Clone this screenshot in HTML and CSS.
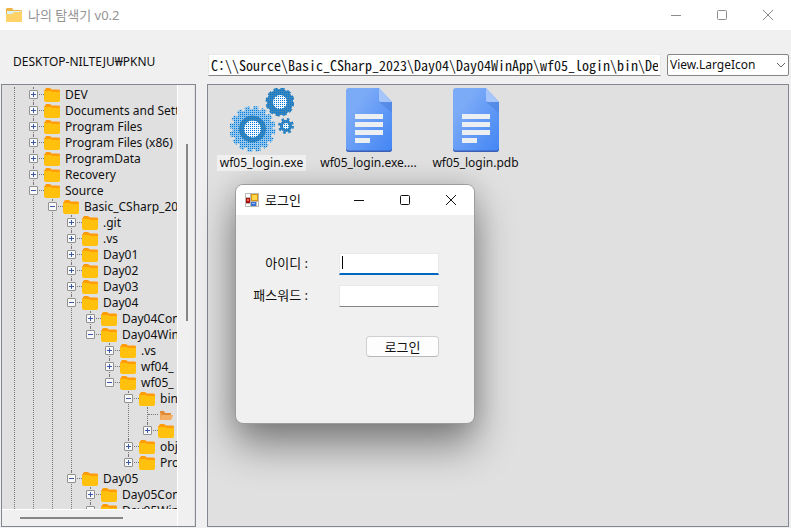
FILE: index.html
```
<!DOCTYPE html>
<html lang="ko">
<head>
<meta charset="utf-8">
<title>나의 탐색기 v0.2</title>
<link rel="stylesheet" href="styles.css">
</head>
<body>
<svg class="defs" aria-hidden="true">
  <defs>
    <linearGradient id="docFill" x1="0" y1="0" x2="1" y2="1">
      <stop offset="0.25" stop-color="#7baaf7"/><stop offset="1" stop-color="#4285f4"/>
    </linearGradient>
    <pattern id="mesh" width="2" height="2" patternUnits="userSpaceOnUse">
      <rect width="2" height="2" fill="#93c6ea"/><rect width="1" height="1" fill="#0078d7"/>
    </pattern>
    <pattern id="meshDark" width="2" height="2" patternUnits="userSpaceOnUse">
      <rect width="2" height="2" fill="#3a86b8"/><rect width="1" height="1" fill="#0078d7"/>
    </pattern>
    <pattern id="meshWhite" width="2" height="2" patternUnits="userSpaceOnUse">
      <rect width="2" height="2" fill="#f4faff"/><rect width="1" height="1" fill="#0078d7"/>
    </pattern>
    <symbol id="folder" viewBox="0 0 16 14">
      <path d="M1 1.5 2 0h4l2 1.5h7l1 1V7H0V3z" fill="#ff9c07"/>
      <path d="M0 3.5 1 3h6l1.5 1H16v8.5L15 14H1.5L0 12.5z" fill="#ffc10d"/>
    </symbol>
    <symbol id="open" viewBox="0 0 16 14">
      <path d="M2 3h4l1 2h6v3H2z" fill="#e08a35"/>
      <path d="M2 12V4l2 3h11l-2 5z" fill="#f0a552"/><path d="M2 12 4 7h11l-2 5z" fill="#f3b067"/>
    </symbol>
    <symbol id="doc" viewBox="0 0 46 64">
      <path d="M3 0h30l13 14v47a3 3 0 0 1-3 3H3a3 3 0 0 1-3-3V3a3 3 0 0 1 3-3z" fill="url(#docFill)"/>
      <path d="M33 14h13v11z" fill="#3f73cf" opacity=".35"/>
      <path d="M33 0l13 14H35a2 2 0 0 1-2-2z" fill="#a6c5fa"/>
      <path d="M0 60.500a3 3 0 0 0 3 2h40a3 3 0 0 0 3-2v.5a3 3 0 0 1-3 3H3a3 3 0 0 1-3-3z" fill="#3a5fb5"/>
      <path d="M9 26h28v5H9zM9 34h28v5H9zM9 42h28v5H9zM9 50h15v5H9z" fill="#eceff1"/>
    </symbol>
  </defs>
</svg>
<main class="window">
  <header class="titlebar">
    <svg class="app-icon" viewBox="0 0 16 14"><path d="M0 1 1 0h5l1.500 2H15l1 1v10l-1 1H1l-1-1z" fill="#eeb342"/><path d="M1 3h14v4H1z" fill="#d9f0f4"/><path d="M0 6h6l2-2h8v9l-1 1H1l-1-1z" fill="#ffd368"/></svg>
    <h1>나의 탐색기 v0.2</h1>
    <div class="caption muted">
      <button type="button" aria-label="최소화"><svg viewBox="0 0 12 12"><path d="M1 6.500h10"/></svg></button>
      <button type="button" aria-label="최대화"><svg viewBox="0 0 12 12"><rect x="1.500" y="1.500" width="9" height="9" rx="1"/></svg></button>
      <button type="button" aria-label="닫기"><svg viewBox="0 0 12 12"><path d="m1 1 10 10M11 1 1 11"/></svg></button>
    </div>
  </header>
  <section class="tools">
    <span class="account">DESKTOP-NILTEJU₩PKNU</span>
    <input class="path" type="text" aria-label="경로" value="C:\\Source\Basic_CSharp_2023\Day04\Day04WinApp\wf05_login\bin\De">
    <div class="view">
      <select aria-label="보기"><option>View.LargeIcon</option></select>
      <svg viewBox="0 0 10 6"><path d="m1 1 4 4 4-4"/></svg>
    </div>
  </section>
  <section class="panes">
    <nav class="tree" aria-label="폴더">
      <div class="tree-view">
        <ul class="root"><li class="stem"><ul>
          <li><div class="node"><button class="box plus" aria-label="펼치기"></button><svg><use href="#folder"/></svg>DEV</div></li>
          <li><div class="node"><button class="box plus" aria-label="펼치기"></button><svg><use href="#folder"/></svg>Documents and Sett</div></li>
          <li><div class="node"><button class="box plus" aria-label="펼치기"></button><svg><use href="#folder"/></svg>Program Files</div></li>
          <li><div class="node"><button class="box plus" aria-label="펼치기"></button><svg><use href="#folder"/></svg>Program Files (x86)</div></li>
          <li><div class="node"><button class="box plus" aria-label="펼치기"></button><svg><use href="#folder"/></svg>ProgramData</div></li>
          <li><div class="node"><button class="box plus" aria-label="펼치기"></button><svg><use href="#folder"/></svg>Recovery</div></li>
          <li class="more"><div class="node"><button class="box" aria-label="접기"></button><svg><use href="#folder"/></svg>Source</div>
            <ul>
              <li class="more"><div class="node"><button class="box" aria-label="접기"></button><svg><use href="#folder"/></svg>Basic_CSharp_20</div>
                <ul>
                  <li><div class="node"><button class="box plus" aria-label="펼치기"></button><svg><use href="#folder"/></svg>.git</div></li>
                  <li><div class="node"><button class="box plus" aria-label="펼치기"></button><svg><use href="#folder"/></svg>.vs</div></li>
                  <li><div class="node"><button class="box plus" aria-label="펼치기"></button><svg><use href="#folder"/></svg>Day01</div></li>
                  <li><div class="node"><button class="box plus" aria-label="펼치기"></button><svg><use href="#folder"/></svg>Day02</div></li>
                  <li><div class="node"><button class="box plus" aria-label="펼치기"></button><svg><use href="#folder"/></svg>Day03</div></li>
                  <li><div class="node"><button class="box" aria-label="접기"></button><svg><use href="#folder"/></svg>Day04</div>
                    <ul>
                      <li><div class="node"><button class="box plus" aria-label="펼치기"></button><svg><use href="#folder"/></svg>Day04Con</div></li>
                      <li><div class="node"><button class="box" aria-label="접기"></button><svg><use href="#folder"/></svg>Day04Win</div>
                        <ul>
                          <li><div class="node"><button class="box plus" aria-label="펼치기"></button><svg><use href="#folder"/></svg>.vs</div></li>
                          <li><div class="node"><button class="box plus" aria-label="펼치기"></button><svg><use href="#folder"/></svg>wf04_</div></li>
                          <li><div class="node"><button class="box" aria-label="접기"></button><svg><use href="#folder"/></svg>wf05_</div>
                            <ul>
                              <li><div class="node"><button class="box" aria-label="접기"></button><svg><use href="#folder"/></svg>bin</div>
                                <ul>
                                  <li><div class="node leaf"><svg><use href="#open"/></svg></div></li>
                                  <li><div class="node"><button class="box plus" aria-label="펼치기"></button><svg><use href="#folder"/></svg></div></li>
                                </ul>
                              </li>
                              <li><div class="node"><button class="box plus" aria-label="펼치기"></button><svg><use href="#folder"/></svg>obj</div></li>
                              <li><div class="node"><button class="box plus" aria-label="펼치기"></button><svg><use href="#folder"/></svg>Pro</div></li>
                            </ul>
                          </li>
                        </ul>
                      </li>
                    </ul>
                  </li>
                  <li class="more"><div class="node"><button class="box" aria-label="접기"></button><svg><use href="#folder"/></svg>Day05</div>
                    <ul>
                      <li><div class="node"><button class="box plus" aria-label="펼치기"></button><svg><use href="#folder"/></svg>Day05Con</div></li>
                      <li><div class="node"><button class="box" aria-label="접기"></button><svg><use href="#folder"/></svg>Day05Win</div></li>
                    </ul>
                  </li>
                </ul>
              </li>
            </ul>
          </li>
        </ul></li></ul>
      </div>
      <div class="vbar"><i></i></div>
      <div class="hbar"><i></i></div>
    </nav>
    <section class="files">
      <figure class="selected">
        <svg class="gears" viewBox="0 0 64 64">
          <circle cx="22.500" cy="41" r="20" fill="url(#mesh)"/>
          <circle cx="22.500" cy="41" r="20.500" fill="none" stroke="url(#mesh)" stroke-width="5" stroke-dasharray="5 3.050"/>
          <circle cx="22.500" cy="41" r="11" fill="url(#meshWhite)" stroke="url(#meshDark)" stroke-width="5"/>
          <circle cx="50" cy="14" r="10" fill="url(#meshWhite)" stroke="url(#meshDark)" stroke-width="6"/>
          <circle cx="50" cy="14" r="12.500" fill="none" stroke="url(#meshDark)" stroke-width="4" stroke-dasharray="4 2.545"/>
          <circle cx="56" cy="38" r="4.500" fill="url(#meshWhite)" stroke="url(#meshDark)" stroke-width="3"/>
          <circle cx="56" cy="38" r="6.500" fill="none" stroke="url(#meshDark)" stroke-width="3" stroke-dasharray="2.500 2.605"/>
        </svg>
        <figcaption>wf05_login.exe</figcaption>
      </figure>
      <figure><svg class="doc"><use href="#doc"/></svg><figcaption>wf05_login.exe....</figcaption></figure>
      <figure><svg class="doc"><use href="#doc"/></svg><figcaption>wf05_login.pdb</figcaption></figure>
    </section>
  </section>
</main>
<section class="dialog" role="dialog" aria-labelledby="login-title">
  <header class="dialog-title">
    <svg class="form-icon" viewBox="0 0 14 14"><path d="M0 0h14v14H0z" fill="#b9b9b9"/><path d="M1 1h4v3H1zM1 11h4v2H1zM12 9h1v4h-1z" fill="#fff"/><path d="M6 1h7v7H6z" fill="#d9930d"/><path d="M7 2h5v5H7z" fill="#ffd84c"/><path d="M1 5h4v5H1z" fill="#a80f12"/><path d="M2 6h2v2H2z" fill="#f36a50"/><path d="M6 9h5v4H6z" fill="#3b6fd0"/><path d="M7 10h3v1H7z" fill="#8fb9f5"/></svg>
    <h2 id="login-title">로그인</h2>
    <div class="caption">
      <button type="button" aria-label="최소화"><svg viewBox="0 0 12 12"><path d="M1 6.500h10"/></svg></button>
      <button type="button" aria-label="최대화"><svg viewBox="0 0 12 12"><rect x="1.500" y="1.500" width="9" height="9" rx="1"/></svg></button>
      <button type="button" aria-label="닫기"><svg viewBox="0 0 12 12"><path d="m1 1 10 10M11 1 1 11"/></svg></button>
    </div>
  </header>
  <form class="login">
    <label for="user">아이디 :</label>
    <div class="field active"><input id="user" type="text"><i class="caret"></i></div>
    <label for="pass">패스워드 :</label>
    <div class="field"><input id="pass" type="password"></div>
    <button class="submit" type="button">로그인</button>
  </form>
</section>
</body>
</html>
```
FILE: styles.css
```
* { box-sizing: border-box; }
body {
  margin: 0;
  background: #f0f0f0;
  color: #111;
  font: 12px/16px "Noto Sans", "Noto Sans CJK KR", sans-serif;
  overflow: hidden;
}
ul { list-style: none; margin: 0; padding: 0; }
button, input, select { font: inherit; color: inherit; padding: 0; }
h1, h2 { margin: 0; font-size: 13px; font-weight: 400; }
.defs { position: absolute; width: 0; height: 0; }

.window { display: flex; flex-direction: column; height: 100vh; padding-bottom: 1px; }
.titlebar { display: flex; align-items: center; height: 30px; padding-left: 6px; background: #fff; color: #949494; flex: none; }
.app-icon { width: 16px; height: 14px; margin-right: 6px; }
.caption { display: flex; margin-left: auto; color: #111; }
.caption.muted { color: #8c8c8c; }
.caption button { width: 46px; height: 30px; border: 0; background: none; display: grid; place-items: center; }
.caption svg { width: 12px; height: 12px; fill: none; stroke: currentColor; }

.tools { display: flex; align-items: center; height: 54px; padding: 16px 2px 0 13px; flex: none; }
.account { width: 195px; padding-bottom: 6px; }
.path {
  flex: 1; min-width: 0; height: 22px; padding: 0 2px;
  border: 1px solid #e8e8e8; border-bottom-color: #858585; background: #fff; outline: 0;
  font: 14px/18px "Noto Sans Mono CJK KR", "Liberation Mono", monospace;
}
.view { position: relative; width: 122px; margin-left: 6px; }
.view select { display: block; width: 100%; height: 22px; padding-left: 2px; border: 1px solid #858585; border-radius: 2px; background: #fff; appearance: none; }
.view svg { position: absolute; right: 3px; top: 8px; width: 10px; height: 6px; fill: none; stroke: #666; }

.panes { display: grid; grid-template-columns: 195px 1fr; gap: 11px; padding: 0 2px 0 1px; flex: 1; min-height: 0; }
.tree { display: grid; grid-template-columns: 1fr 18px; grid-template-rows: 1fr 17px; border: 1px solid #828790; background: #f0f0f0; min-height: 0; }
.tree-view { overflow: hidden; background: #e0e0e0; padding: 2px 0 0 3px; min-height: 0; }
.vbar { border-left: 1px solid #fff; grid-row: 1 / 3; grid-column: 2; padding: 59px 0 0 8px; border-right: 1px solid #e0e0e0; }
.vbar i { display: block; width: 2px; height: 177px; background: #868686; }
.hbar { grid-row: 2; grid-column: 1; border-top: 1px solid #fff; padding: 7px 0 0 18px; }
.hbar i { display: block; width: 103px; height: 2px; background: #868686; }

.tree li { position: relative; }
.tree li::before { content: ""; position: absolute; left: 9px; top: 0; bottom: 0; border-left: 1px dotted #777; }
.tree li:last-child:not(.more):not(.stem)::before { bottom: auto; height: 8px; }
.tree li ul { margin-left: 19px; }
.node { display: flex; align-items: center; height: 16px; white-space: nowrap; position: relative; padding-left: 5px; }
.node::before { content: ""; position: absolute; left: 10px; width: 10px; top: 7px; border-top: 1px dotted #777; }
.node svg { width: 16px; height: 14px; margin: 0 5px 0 6px; position: relative; flex: none; }
.node.leaf svg { margin-left: 15px; }
.box {
  position: relative; width: 9px; height: 9px; margin-bottom: 1px; border: 1px solid #919191; border-radius: 1px; flex: none;
  background: linear-gradient(#3b5ba8, #3b5ba8) center / 5px 1px no-repeat #f8f8f8;
}
.plus { background: linear-gradient(#3b5ba8, #3b5ba8) center / 5px 1px no-repeat, linear-gradient(#3b5ba8, #3b5ba8) center / 1px 5px no-repeat #f8f8f8; }
.root > .stem { min-height: 440px; }

.files { display: flex; align-items: flex-start; border: 1px solid #828790; background: #e0e0e0; padding-top: 3px; }
.files figure { margin: 0; width: 107px; display: flex; flex-direction: column; align-items: center; gap: 3px; }
.files svg { margin-left: 1px; }
.gears { width: 64px; height: 64px; }
.doc { width: 46px; height: 64px; }
.files figcaption { padding: 0 3px; white-space: nowrap; }
.selected figcaption { background: #f0f0f0; }

.dialog {
  position: absolute; left: 235px; top: 184px; width: 240px; height: 240px;
  border: 1px solid #9c9c9c; border-radius: 8px; background: #f0f0f0; overflow: hidden;
  box-shadow: 0 22px 40px rgba(0, 0, 0, .42), 0 0 24px rgba(0, 0, 0, .14);
}
.dialog-title { display: flex; align-items: center; height: 30px; padding-left: 9px; background: #fff; }
.form-icon { width: 14px; height: 14px; margin-right: 6px; }
.login { display: grid; grid-template-columns: 72px 100px; column-gap: 31px; row-gap: 10px; padding-top: 38px; align-items: center; font-size: 13px; }
.login label { text-align: right; white-space: nowrap; padding-bottom: 2px; }
.field { position: relative; height: 22px; }
.field input { display: block; width: 100%; height: 22px; border: 1px solid #e8e8e8; border-bottom-color: #858585; background: #fff; outline: 0; }
.active input { border-bottom: 2px solid #0067c0; }
.caret { position: absolute; left: 3px; top: 3px; width: 1px; height: 13px; background: #000; }
.submit { grid-column: 2; justify-self: end; width: 73px; height: 21px; margin-top: 19px; border: 1px solid #d0d0d0; border-bottom-color: #b8b8b8; border-radius: 4px; background: #fdfdfd; line-height: 16px; }
```
